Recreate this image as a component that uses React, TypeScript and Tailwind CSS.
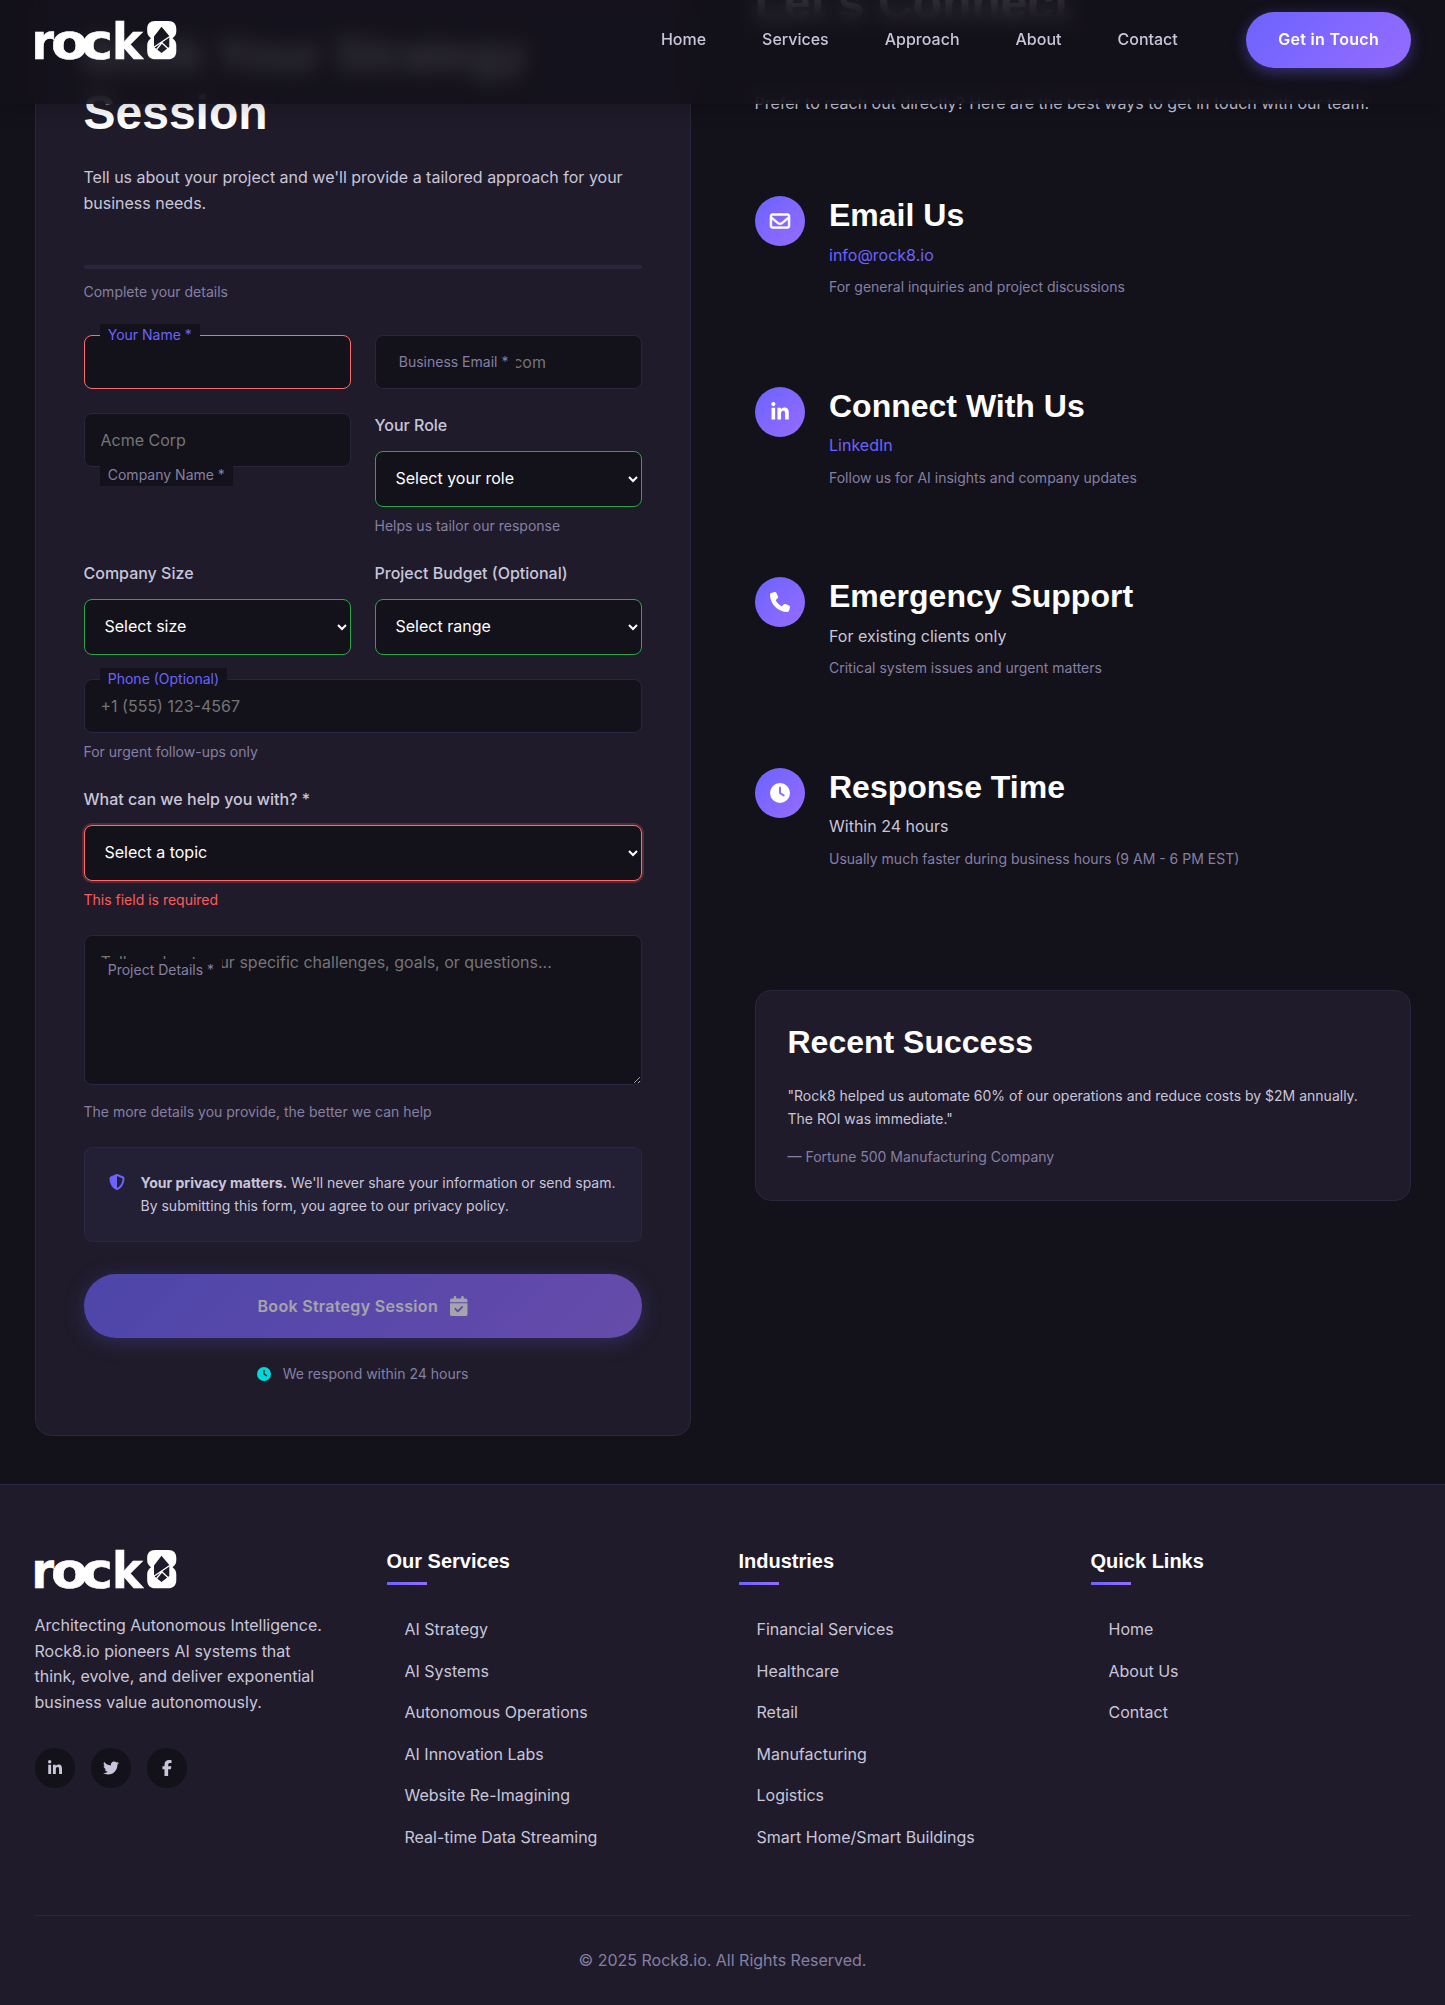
import React from "react";
import { FaClock, FaFacebookF, FaLinkedinIn, FaPhone, FaRegEnvelope, FaShieldHalved, FaTwitter } from "react-icons/fa6";

const logoLetters = [
  { ch: "r", x: -3.6, w: 22.5 },
  { ch: "o", x: 16, w: 37.1 },
  { ch: "c", x: 46, w: 32 },
  { ch: "k", x: 77, w: 30.7 },
];

function Logo() {
  return (
    <svg width="142" height="40" viewBox="0 0 142 40" className="block overflow-visible">
      {logoLetters.map(({ ch, x, w }) => (
        <text
          key={ch}
          x={x}
          y="38.700"
          textLength={w}
          lengthAdjust="spacingAndGlyphs"
          fontFamily="'DejaVu Sans', sans-serif"
          fontWeight="700"
          fontSize="50"
          fill="#fff"
          stroke="#fff"
          strokeWidth="0.600"
        >
          {ch}
        </text>
      ))}
      <path
        fill="#fff"
        fillRule="evenodd"
        d="M120 1h13.500c5 0 7.800 2.800 7.800 7.800v2.500c0 3.200-1.300 5.200-3.800 7 2.500 1.800 3.800 4 3.800 7.200v5.500c0 5.500-3 8.300-8.300 8.300h-12.500c-5.300 0-8.300-2.800-8.300-8.300v-5.500c0-3.200 1.300-5.400 3.800-7.200-2.500-1.800-3.800-3.800-3.800-7v-2.500C112.200 3.800 115 1 120 1ZM126.500 6.700l-7.500 9.800v10.500l7.500 6 7.800-6v-11z"
      />
      <path
        d="M118.500 27.500L134.800 16.500M126.500 22.500l7 6.500M127.500 22l-6 7.500"
        stroke="#fff"
        strokeWidth="1.300"
        fill="none"
      />
    </svg>
  );
}

function CalendarCheck() {
  return (
    <svg viewBox="0 0 448 512" className="h-5 w-[17.5px]" fill="currentColor">
      <path d="M96 32a32 32 0 0 1 64 0v32h128V32a32 32 0 0 1 64 0v32h48a48 48 0 0 1 48 48v48H0v-48a48 48 0 0 1 48-48h48z" />
      <path
        fillRule="evenodd"
        d="M0 184h448v280a48 48 0 0 1-48 48H48a48 48 0 0 1-48-48zM329 297a24 24 0 0 0-34-34l-95 95-47-47a24 24 0 0 0-34 34l64 64a24 24 0 0 0 34 0z"
      />
    </svg>
  );
}

const floatBase =
  "absolute left-[16.25px] bg-[#13111a] px-2 text-[14px] leading-[22.4px] whitespace-nowrap";
const inputBase =
  "block h-[54px] w-full rounded-lg border bg-[#13111a] px-4 text-[16px] text-white placeholder:text-[#757575] outline-none";
const selectBase =
  "block h-14 w-full rounded-lg border bg-[#13111a] px-4 pb-px text-[16px] text-white outline-none";
const labelBase = "mb-3 block text-[16px] font-medium leading-[25.6px] text-[#c9c6d9]";
const helpBase = "mt-2 text-[14px] leading-[22.4px] text-[#8580a3]";

function SelectField({ label, option, help }: { label: string; option: string; help?: string }) {
  return (
    <div>
      <label className={labelBase}>{label}</label>
      <select className={selectBase + " border-[#28a745]"}>
        <option>{option}</option>
      </select>
      {help && <p className={helpBase}>{help}</p>}
    </div>
  );
}

function Header() {
  const links = ["Home", "Services", "Approach", "About", "Contact"];
  return (
    <header className="fixed inset-x-0 top-0 z-50 h-[104px] bg-[#13111a]/85 shadow-[0_4px_20px_rgba(0,0,0,0.2)] backdrop-blur-[10px]">
      <div className="ml-[35px] flex h-20 w-[1376px] items-center justify-between">
        <Logo />
        <nav className="flex items-center">
          <div className="flex gap-14 pb-0.5 pr-[68.5px] text-[16px] font-medium text-[#c9c6d9]">
            {links.map((l) => (
              <a key={l}>{l}</a>
            ))}
          </div>
          <a className="flex h-14 items-center rounded-full bg-[linear-gradient(135deg,#6c63ff,#966cff)] px-8 pb-0.5 text-[16px] font-semibold tracking-[0.3px] text-white shadow-[0_4px_15px_rgba(108,99,255,0.4)]">
            Get in Touch
          </a>
        </nav>
      </div>
    </header>
  );
}

function BookingCard() {
  return (
    <section className="h-[1458.8px] w-[656px] rounded-2xl border border-[#2a263d] bg-[#1f1b2a] p-12">
      <h2 className="mb-6 font-['Liberation_Sans'] text-[48px] font-bold leading-[57.6px] text-white">
        Book Your Strategy Session
      </h2>
      <p className="text-[16px] leading-[25.6px] text-[#c9c6d9]">
        Tell us about your project and we'll provide a tailored approach for your business needs.
      </p>
      <div className="mt-12 h-1 rounded-sm bg-[#2a263d]" />
      <p className="mt-3 text-[14px] leading-[22.4px] text-[#8580a3]">Complete your details</p>

      <form className="mt-8 flex flex-col gap-6">
        <div className="grid grid-cols-2 gap-6">
          <div className="relative">
            <input className={inputBase + " border-[#ff6b6b]"} />
            <label className={floatBase + " -top-[11px] text-[#6c63ff]"}>Your Name *</label>
          </div>
          <div className="relative">
            <input className={inputBase + " border-[#2a263d]"} placeholder="john@company.com" />
            <label className={floatBase + " top-4 text-[#8580a3]"}>Business Email *</label>
          </div>
          <div className="relative">
            <input className={inputBase + " border-[#2a263d]"} placeholder="Acme Corp" />
            <label className={floatBase + " top-[51px] text-[#8580a3]"}>Company Name *</label>
          </div>
          <SelectField label="Your Role" option="Select your role" help="Helps us tailor our response" />
          <SelectField label="Company Size" option="Select size" />
          <SelectField label="Project Budget (Optional)" option="Select range" />
        </div>

        <div className="relative">
          <input className={inputBase + " border-[#2a263d]"} placeholder="+1 (555) 123-4567" />
          <label className={floatBase + " -top-[11px] text-[#6c63ff]"}>Phone (Optional)</label>
          <p className={helpBase}>For urgent follow-ups only</p>
        </div>

        <div>
          <label className={labelBase}>What can we help you with? *</label>
          <select className={selectBase + " border-[#ff6b6b] shadow-[0_0_0_2px_rgba(255,82,82,0.25)]"}>
            <option>Select a topic</option>
          </select>
          <p className="mt-2 text-[14px] leading-[22.4px] text-[#ff5a5a]">This field is required</p>
        </div>

        <div className="relative">
          <textarea
            className="block h-[150px] w-full rounded-lg border border-[#2a263d] bg-[#13111a] p-4 text-[16px] leading-[20px] text-white outline-none placeholder:text-[#757575]"
            placeholder="Tell us about your specific challenges, goals, or questions..."
          />
          <label className={floatBase + " top-[24px] text-[#8580a3]"}>Project Details *</label>
          <p className="mt-4 text-[14px] leading-[22.4px] text-[#8580a3]">
            The more details you provide, the better we can help
          </p>
        </div>

        <div className="flex gap-4 rounded-lg border border-[#2a2645] bg-[#231f34] p-6">
          <FaShieldHalved className="mt-0.5 size-4 shrink-0 text-[#6c63ff]" />
          <p className="-mr-2 text-[14px] leading-[22.4px] text-[#c9c6d9]">
            <strong className="font-bold">Your privacy matters.</strong> We'll never share your information or
            send spam. By submitting this form, you agree to our privacy policy.
          </p>
        </div>
      </form>

      <button className="mt-8 flex h-16 w-full items-center justify-center gap-3 rounded-full bg-[linear-gradient(135deg,#6c63ff,#966cff)] text-[16px] font-semibold tracking-[0.3px] text-white opacity-60 shadow-[0_4px_20px_rgba(108,99,255,0.4)]">
        Book Strategy Session
        <CalendarCheck />
      </button>
      <div className="mt-[25px] flex items-center justify-center gap-3 text-[14px] leading-[22.4px] text-[#8580a3]">
        <FaClock className="size-[14px] text-[#00d9d9]" />
        We respond within 24 hours
      </div>
    </section>
  );
}

const contacts = [
  { icon: FaRegEnvelope, title: "Email Us", line: "info@rock8.io", link: true, note: "For general inquiries and project discussions" },
  { icon: FaLinkedinIn, title: "Connect With Us", line: "LinkedIn", link: true, note: "Follow us for AI insights and company updates" },
  { icon: FaPhone, title: "Emergency Support", line: "For existing clients only", link: false, note: "Critical system issues and urgent matters" },
  { icon: FaClock, title: "Response Time", line: "Within 24 hours", link: false, note: "Usually much faster during business hours (9 AM - 6 PM EST)" },
];

function ContactColumn() {
  return (
    <section className="w-[656px]">
      <h2 className="-mt-[3px] font-['Liberation_Sans'] text-[48px] font-bold leading-[57.6px] text-white">
        Let's Connect
      </h2>
      <p className="mt-[59px] text-[16px] leading-[25.6px] text-[#c9c6d9]">
        Prefer to reach out directly? Here are the best ways to get in touch with our team.
      </p>
      <div className="mt-20 flex flex-col gap-[88px]">
        {contacts.map(({ icon: Icon, title, line, link, note }) => (
          <div key={title} className="flex gap-[24.5px]">
            <div className="flex size-[50px] shrink-0 items-center justify-center rounded-full bg-[linear-gradient(135deg,#6c63ff,#966cff)] text-white">
              <Icon className={Icon === FaRegEnvelope ? "size-5 overflow-visible stroke-white stroke-[14]" : "size-5"} />
            </div>
            <div>
              <h3 className="font-['Liberation_Sans'] text-[32px] font-bold leading-[38.4px] text-white">{title}</h3>
              <p className={link ? "mt-2 text-[16px] leading-[25.6px] text-[#6c63ff]" : "mt-2 text-[16px] leading-[25.6px] text-[#c9c6d9]"}>
                {line}
              </p>
              <p className={helpBase}>{note}</p>
            </div>
          </div>
        ))}
      </div>
      <div className="mt-[120px] h-[211px] rounded-2xl border border-[#2a263d] bg-[#1f1b2a] p-8">
        <h3 className="font-['Liberation_Sans'] text-[32px] font-bold leading-[38.4px] text-white">Recent Success</h3>
        <p className="mt-[23px] text-[14px] leading-[23px] text-[#c9c6d9]">
          "Rock8 helped us automate 60% of our operations and reduce costs by $2M annually. The ROI was immediate."
        </p>
        <p className="mt-4 text-[14px] leading-[22.4px] text-[#8580a3]">— Fortune 500 Manufacturing Company</p>
      </div>
    </section>
  );
}

const columns = [
  {
    title: "Our Services",
    links: ["AI Strategy", "AI Systems", "Autonomous Operations", "AI Innovation Labs", "Website Re-Imagining", "Real-time Data Streaming"],
  },
  {
    title: "Industries",
    links: ["Financial Services", "Healthcare", "Retail", "Manufacturing", "Logistics", "Smart Home/Smart Buildings"],
  },
  { title: "Quick Links", links: ["Home", "About Us", "Contact"] },
];

function Footer() {
  return (
    <footer className="mt-12 border-t border-[#2a263d] bg-[#1f1b2a] pt-16">
      <div className="mx-auto w-[1376px]">
        <div className="grid h-[366px] grid-cols-4 gap-8">
          <div>
            <Logo />
            <p className="mt-6 w-[290px] text-[16px] leading-[25.6px] text-[#c9c6d9]">
              Architecting Autonomous Intelligence. Rock8.io pioneers AI systems that think, evolve, and deliver
              exponential business value autonomously.
            </p>
            <div className="mt-[33px] flex gap-4">
              {[FaLinkedinIn, FaTwitter, FaFacebookF].map((Icon, i) => (
                <a key={i} className="flex size-10 items-center justify-center rounded-full bg-[#13111a] text-[#c9c6d9]">
                  <Icon className="size-4" />
                </a>
              ))}
            </div>
          </div>
          {columns.map((c) => (
            <div key={c.title}>
              <h4 className="font-['Liberation_Sans'] text-[20px] font-bold leading-6 text-white">{c.title}</h4>
              <div className="mt-[9px] h-[3px] w-10 bg-[linear-gradient(135deg,#6c63ff,#966cff)]" />
              <ul className="mt-8 flex flex-col gap-4 pl-[18px] text-[16px] leading-[25.6px] text-[#c9c6d9]">
                {c.links.map((l) => (
                  <li key={l}>{l}</li>
                ))}
              </ul>
            </div>
          ))}
        </div>
        <div className="h-[91px] border-t border-[#2a263d] pt-8 text-center text-[16px] leading-[25.6px] text-[#8580a3]">
          © 2025 Rock8.io. All Rights Reserved.
        </div>
      </div>
    </footer>
  );
}

export default function App() {
  return (
    <div className="h-[2005px] overflow-hidden bg-[#13111a] font-['Inter',sans-serif]">
      <Header />
      <main className="mx-auto -mt-[22.75px] flex w-[1376px] gap-16">
        <BookingCard />
        <ContactColumn />
      </main>
      <Footer />
    </div>
  );
}
